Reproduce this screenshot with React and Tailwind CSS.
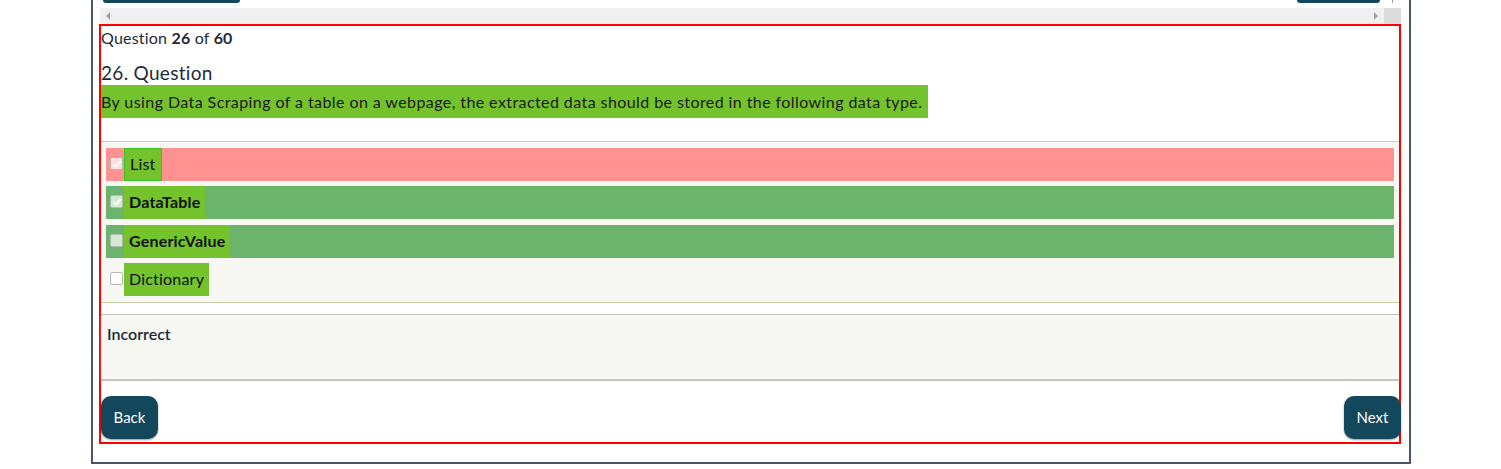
import React from "react";

const options = [
  { label: "List", checked: true, row: "bg-[#ff9191]", bold: false, boxed: true, gap: "mt-0" },
  { label: "DataTable", checked: true, row: "bg-[#6cb46c]", bold: true, gap: "mt-[5px]" },
  { label: "GenericValue", checked: false, row: "bg-[#6cb46c]", bold: true, gap: "mt-[6px]" },
  { label: "Dictionary", checked: false, row: "bg-transparent", bold: false, gap: "mt-[5px]" },
];

function Check({ checked }) {
  return (
    <span className="mt-[1px] flex h-[13px] w-[13px] shrink-0 items-center justify-center rounded-[2px] border border-[#b8b8b8] bg-white/70">
      {checked && (
        <svg width="10" height="10" viewBox="0 0 10 10">
          <path d="M1.5 5.2 L4 7.6 L8.6 2.4" fill="none" stroke="#ffffff" strokeWidth="1.8" />
        </svg>
      )}
    </span>
  );
}

export default function App() {
  return (
    <div className="h-[469px] w-full bg-white" style={{ fontFamily: "Lato, 'Open Sans', sans-serif" }}>
      <div className="ml-[91px] h-[464px] w-[1320px] border-x-2 border-b-2 border-[#4b5563] pl-[6px] pr-[8px]">
        {/* bit of the previous block that is scrolled away */}
        <div className="relative h-[8px]">
          <div className="absolute left-[4px] top-0 h-[3px] w-[137px] rounded-b-[6px] bg-[#13475c]" />
          <div className="absolute left-[1198px] top-0 h-[3px] w-[83px] rounded-b-[6px] bg-[#13475c]" />
          <div className="absolute left-[1293px] top-0 h-[3px] w-px bg-[#a0a0a0]" />
        </div>
        <div className="ml-px flex h-[16px]">
          <div className="flex flex-1 items-center justify-between bg-[#f0f0f0] px-[6px]">
            <span className="h-0 w-0 border-y-[4px] border-r-[4px] border-y-transparent border-r-[#a3a3a3]" />
            <span className="h-0 w-0 border-y-[4px] border-l-[4px] border-y-transparent border-l-[#a3a3a3]" />
          </div>
          <div className="w-[17px] bg-[#dcdcdc]" />
        </div>

        <div className="h-[420px] border-2 border-[#ff0000]">
          <div className="text-[16px] leading-[24px] tracking-[0.2px] text-[#1d2b3a]">
            Question <b>26</b> of <b>60</b>
          </div>
          <div className="mt-[11px] text-[19px] leading-[24px] tracking-[0.3px] text-[#1d2b3a]">26. Question</div>
          <div className="inline-block bg-[#74c22c] py-[5px] pr-[6px] text-[16px] leading-[23px] tracking-[0.42px] text-[#1a1a1a]">
            By using Data Scraping of a table on a webpage, the extracted data should be stored in the following data type.
          </div>

          <div className="mt-[23px] flex flex-col border-y border-[#c9d3a9] bg-[#f7f8f3] px-[5px] pb-[6px] pt-[6px]">
            {options.map((o) => (
              <div key={o.label} className={`flex h-[33px] items-start ${o.row} ${o.gap}`}>
                <div className="flex h-full items-start pl-[4px] pr-[1px] pt-[8px]">
                  <Check checked={o.checked} />
                </div>
                <span
                  className={`flex h-full items-center bg-[#74c22c] px-[5px] pb-[2px] text-[16px] tracking-[0.2px] text-[#111] ${
                    o.bold ? "font-bold" : ""
                  } ${o.boxed ? "border border-[#3cc41c]" : ""}`}
                >
                  {o.label}
                </span>
              </div>
            ))}
          </div>

          <div className="mt-[11px] h-[65px] border-t border-[#c0c0c0] bg-[#f7f8f3] px-[6px] pt-[7px] shadow-[0_2px_1px_#c4c4c4]">
            <span className="text-[16px] font-semibold leading-[22px] text-[#1d2b3a]">Incorrect</span>
          </div>

          <div className="mt-[17px] flex justify-between">
            <button className="h-[43px] w-[57px] rounded-[10px] bg-[#13475c] text-[15px] text-white shadow-[0_1px_2px_rgba(0,0,0,0.4)]">
              Back
            </button>
            <button className="-mr-[2px] h-[43px] w-[57px] rounded-[10px] bg-[#13475c] text-[15px] text-white shadow-[0_1px_2px_rgba(0,0,0,0.4)]">
              Next
            </button>
          </div>
        </div>
      </div>
    </div>
  );
}
